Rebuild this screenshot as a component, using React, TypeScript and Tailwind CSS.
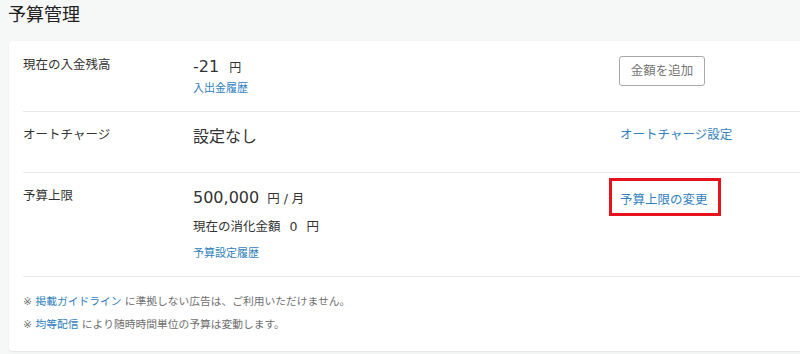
import React from "react";

const font = {
  fontFamily: '"DejaVu Sans", "Noto Sans CJK JP", sans-serif',
};

function Link({ children, className = "" }: { children: React.ReactNode; className?: string }) {
  return <a className={`text-[#3281bd] cursor-pointer ${className}`}>{children}</a>;
}

export default function App() {
  return (
    <div
      className="w-[800px] h-[354px] overflow-hidden bg-[#f6f7f7] text-[#333]"
      style={font}
    >
      <h1 className="pl-[8px] pt-[3px] text-[18px] leading-[24px] font-normal text-[#222]">
        予算管理
      </h1>

      <div className="ml-[9px] mt-[14px] w-[840px] rounded-[4px] bg-white pl-[14px] shadow-[0_1px_2px_rgba(0,0,0,0.08)]">
        {/* 入金残高 */}
        <div className="flex h-[71px] items-start border-b border-[#e8e9ea] pt-[15px]">
          <div className="w-[170px] text-[12.5px] leading-[18px]">現在の入金残高</div>
          <div className="w-[426px]">
            <div className="flex items-baseline leading-[22px]">
              <span className="text-[16px]">-21</span>
              <span className="ml-[10px] text-[12px]">円</span>
            </div>
            <Link className="mt-[2px] block text-[11px] leading-[16px]">入出金履歴</Link>
          </div>
          <button className="h-[30px] w-[86px] rounded-[3px] border border-[#a9a9a9] bg-white text-[12.5px] text-[#777]">
            金額を追加
          </button>
        </div>

        {/* オートチャージ */}
        <div className="flex h-[61px] items-start border-b border-[#e8e9ea] pt-[14px]">
          <div className="w-[170px] text-[12.5px] leading-[18px]">オートチャージ</div>
          <div className="w-[427px] text-[16px] leading-[22px]">設定なし</div>
          <Link className="text-[12.5px] leading-[18px]">オートチャージ設定</Link>
        </div>

        {/* 予算上限 */}
        <div className="flex h-[104px] items-start border-b border-[#e8e9ea] pt-[14px]">
          <div className="w-[170px] text-[12.5px] leading-[18px]">予算上限</div>
          <div className="w-[427px]">
            <div className="flex items-baseline leading-[22px]">
              <span className="text-[16px]">500,000</span>
              <span className="ml-[8px] text-[12.5px]">円 / 月</span>
            </div>
            <div className="mt-[8px] text-[12.5px] leading-[18px]">
              現在の消化金額<span className="ml-[9px]">0</span>
              <span className="ml-[9px]">円</span>
            </div>
            <Link className="mt-[10px] block text-[11px] leading-[16px]">予算設定履歴</Link>
          </div>
          <span className="relative">
            <Link className="text-[12.5px] leading-[18px]">予算上限の変更</Link>
            <span className="absolute -left-[11px] -top-[9px] h-[38px] w-[112px] border-[3px] border-[#e8121c]" />
          </span>
        </div>

        {/* notes */}
        <div className="pb-[18px] pt-[17px] text-[10.75px] leading-[16px] text-[#707070]">
          <p>
            ※ <Link>掲載ガイドライン</Link> に準拠しない広告は、ご利用いただけません。
          </p>
          <p className="mt-[7px]">
            ※ <Link>均等配信</Link> により随時時間単位の予算は変動します。
          </p>
        </div>
      </div>
    </div>
  );
}
